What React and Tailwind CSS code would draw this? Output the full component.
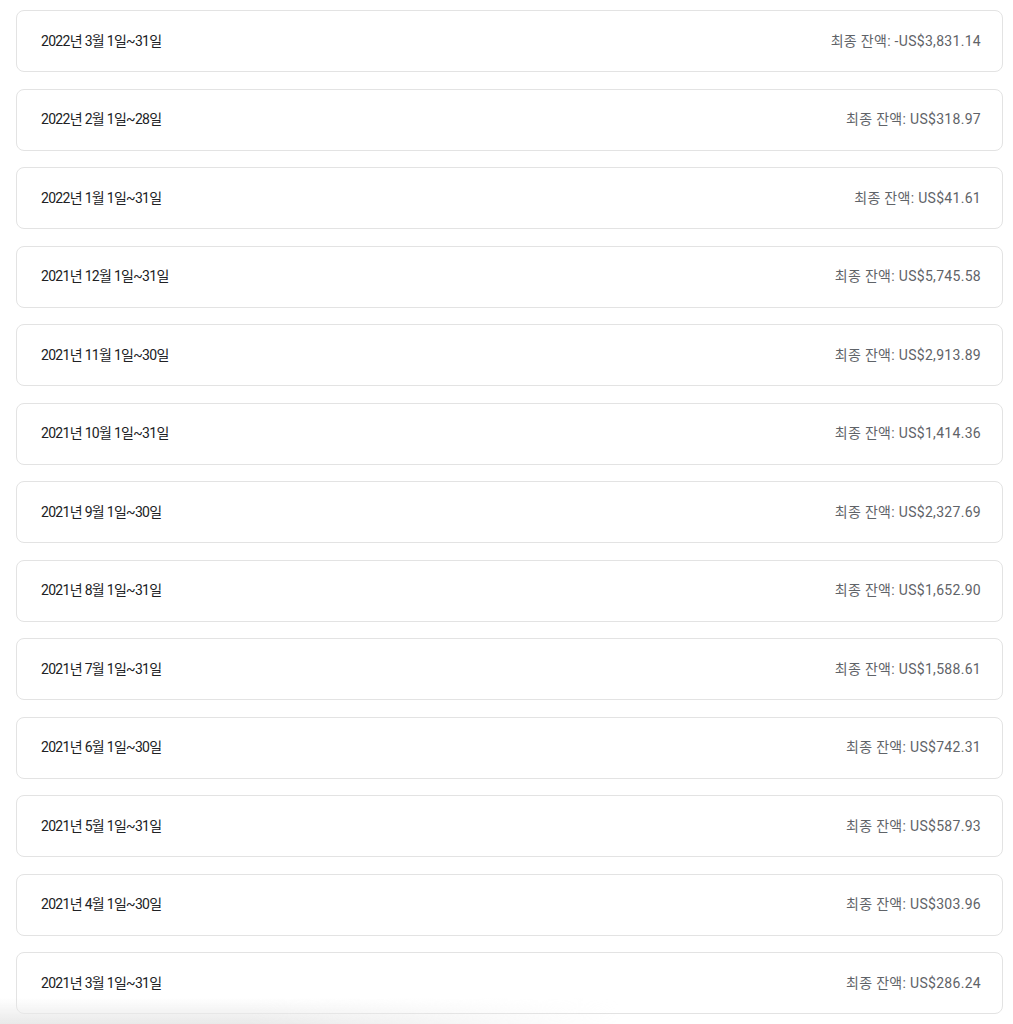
const STATEMENTS = [
  { period: '2022년 3월 1일~31일', balance: '-US$3,831.14' },
  { period: '2022년 2월 1일~28일', balance: 'US$318.97' },
  { period: '2022년 1월 1일~31일', balance: 'US$41.61' },
  { period: '2021년 12월 1일~31일', balance: 'US$5,745.58' },
  { period: '2021년 11월 1일~30일', balance: 'US$2,913.89' },
  { period: '2021년 10월 1일~31일', balance: 'US$1,414.36' },
  { period: '2021년 9월 1일~30일', balance: 'US$2,327.69' },
  { period: '2021년 8월 1일~31일', balance: 'US$1,652.90' },
  { period: '2021년 7월 1일~31일', balance: 'US$1,588.61' },
  { period: '2021년 6월 1일~30일', balance: 'US$742.31' },
  { period: '2021년 5월 1일~31일', balance: 'US$587.93' },
  { period: '2021년 4월 1일~30일', balance: 'US$303.96' },
  { period: '2021년 3월 1일~31일', balance: 'US$286.24' },
];

function StatementRow({ period, balance }) {
  return (
    <div className="flex h-[62px] items-center justify-between rounded-lg border border-[#e3e3e3] bg-white pl-6 pr-[21px]">
      <span className="text-[14px] tracking-[-0.7px] text-[#202124] [font-family:Roboto,'Noto_Sans_CJK_KR',sans-serif]">
        {period}
      </span>
      <span className="text-[14px] tracking-[0.3px] text-[#5f6368] [font-family:Roboto,'Noto_Sans_CJK_KR',sans-serif]">
        최종 잔액: {balance}
      </span>
    </div>
  );
}

export default function App() {
  return (
    <div className="relative h-[1024px] overflow-hidden bg-white">
      <div className="flex flex-col gap-[16.5px] pt-[10px] pl-4 pr-[10px]">
        {STATEMENTS.map((s) => (
          <StatementRow key={s.period} {...s} />
        ))}
      </div>
      {/* soft shade along the bottom-left edge of the capture */}
      <div className="pointer-events-none absolute bottom-0 left-0 h-[26px] w-[620px] bg-gradient-to-t from-[#e9e9e9] to-transparent [mask-image:linear-gradient(to_right,black_40%,transparent)]" />
    </div>
  );
}
